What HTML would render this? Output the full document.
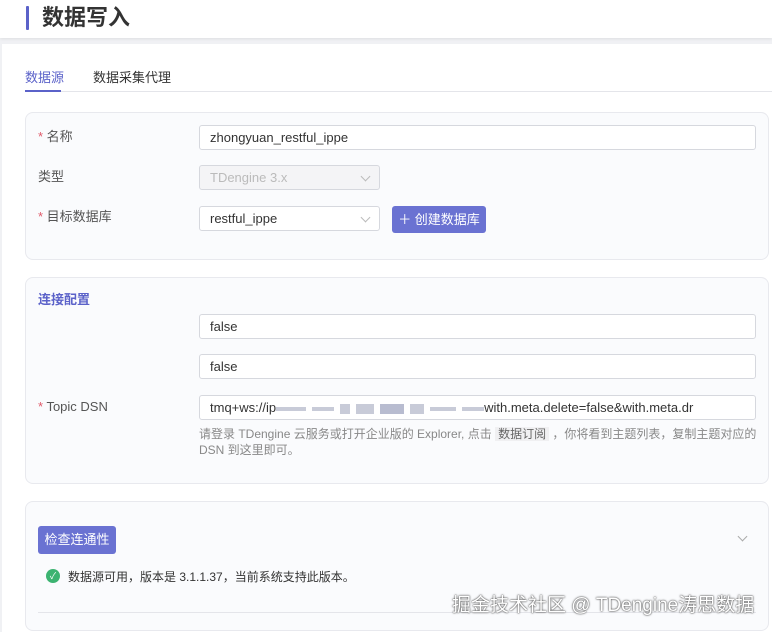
<!DOCTYPE html>
<html><head><meta charset="utf-8"><style>
*{box-sizing:border-box;margin:0;padding:0}
body{width:772px;height:632px;overflow:hidden;background:#f0f1f4;font-family:"Liberation Sans","Noto Sans CJK SC",sans-serif;font-size:13px;color:#333;position:relative}
.abs{position:absolute}
.hdr{left:0;top:0;width:772px;height:38px;background:#fff;box-shadow:0 1px 3px rgba(0,0,0,.08)}
.bar{left:26px;top:6px;width:3px;height:24px;background:#5b62c9;border-radius:1px}
.title{left:42px;top:4px;font-size:22px;font-weight:bold;color:#333;line-height:28px}
.main{left:2px;top:44px;width:770px;height:588px;background:#fff}
.card{left:25px;width:744px;border:1px solid #e8e9ee;border-radius:8px;background:#fafbfd}
.lbl{left:38px;font-size:13px;color:#555;line-height:16px}
.lbl b{color:#e05a6a;font-weight:normal}
.inp{left:199px;height:25px;border:1px solid #d6d8de;border-radius:3px;background:#fff;padding-left:10px;line-height:23px;font-size:13px;color:#333;white-space:nowrap;overflow:hidden}
.chev{position:absolute;right:10px;top:7px;width:7px;height:7px;border-right:1px solid #bbb;border-bottom:1px solid #bbb;transform:rotate(45deg)}
.btn{background:#6a72d2;color:#fff;border-radius:3px;font-size:13px;text-align:center}
.blur{display:inline-block;vertical-align:middle;height:10px;background:#c8cbd8;margin-right:6px}
</style></head><body>
<div class="abs hdr"></div><div class="abs bar"></div><div class="abs title">数据写入</div>
<div class="abs main"></div>
<div class="abs" style="left:25px;top:67px;color:#5b62c9;font-size:13px">数据源</div>
<div class="abs" style="left:93px;top:67px;color:#333;font-size:13px">数据采集代理</div>
<div class="abs" style="left:25px;top:91px;width:747px;height:1px;background:#e4e5ea"></div>
<div class="abs" style="left:25px;top:90px;width:36px;height:2px;background:#5b62c9"></div>

<div class="abs card" style="top:112px;height:148px"></div>
<div class="abs lbl" style="top:129px"><b>* </b>名称</div>
<div class="abs inp" style="top:125px;width:557px">zhongyuan_restful_ippe</div>
<div class="abs lbl" style="top:169px">类型</div>
<div class="abs inp" style="top:165px;width:181px;background:#f4f4f6;color:#bbb">TDengine 3.x<span class="chev"></span></div>
<div class="abs lbl" style="top:209px"><b>* </b>目标数据库</div>
<div class="abs inp" style="top:206px;width:181px">restful_ippe<span class="chev"></span></div>
<div class="abs btn" style="left:392px;top:206px;width:94px;height:27px;line-height:27px">＋ 创建数据库</div>

<div class="abs card" style="top:277px;height:207px"></div>
<div class="abs" style="left:38px;top:289px;color:#5b62c9;font-weight:bold;font-size:13px">连接配置</div>
<div class="abs inp" style="top:314px;width:557px">false</div>
<div class="abs inp" style="top:354px;width:557px">false</div>
<div class="abs lbl" style="top:399px"><b>* </b>Topic DSN</div>
<div class="abs inp" style="top:395px;width:557px">tmq+ws://ip<span class="blur" style="width:30px;height:4px"></span><span class="blur" style="width:22px;height:4px"></span><span class="blur" style="width:10px"></span><span class="blur" style="width:18px"></span><span class="blur" style="width:24px;background:#b8bcd0"></span><span class="blur" style="width:14px"></span><span class="blur" style="width:26px;height:4px"></span><span class="blur" style="width:22px;height:4px;margin-right:0"></span>with.meta.delete=false&amp;with.meta.dr</div>
<div class="abs" style="left:199px;top:426px;width:560px;font-size:12px;color:#888;line-height:16px">请登录 TDengine 云服务或打开企业版的 Explorer, 点击 <span style="background:#f0f0f2;padding:0 3px;color:#666">数据订阅</span> ，你将看到主题列表，复制主题对应的 DSN 到这里即可。</div>

<div class="abs card" style="top:501px;height:130px"></div>
<div class="abs btn" style="left:38px;top:526px;width:78px;height:28px;line-height:28px">检查连通性</div>
<div class="abs" style="left:739px;top:533px;width:7px;height:7px;border-right:1px solid #aaa;border-bottom:1px solid #aaa;transform:rotate(45deg)"></div>
<div class="abs" style="left:46px;top:569px;width:14px;height:14px;border-radius:50%;background:#3cb371;color:#fff;font-size:9px;text-align:center;line-height:14px">✓</div>
<div class="abs" style="left:68px;top:568px;font-size:12px;color:#333">数据源可用，版本是 3.1.1.37，当前系统支持此版本。</div>
<div class="abs" style="left:38px;top:612px;width:718px;height:1px;background:#e4e5ea"></div>
<div class="abs" style="left:452px;top:590px;font-size:19px;color:#fff;text-shadow:0 0 2px #444,0 0 1px #444">掘金技术社区 @ TDengine涛思数据</div>
</body></html>
